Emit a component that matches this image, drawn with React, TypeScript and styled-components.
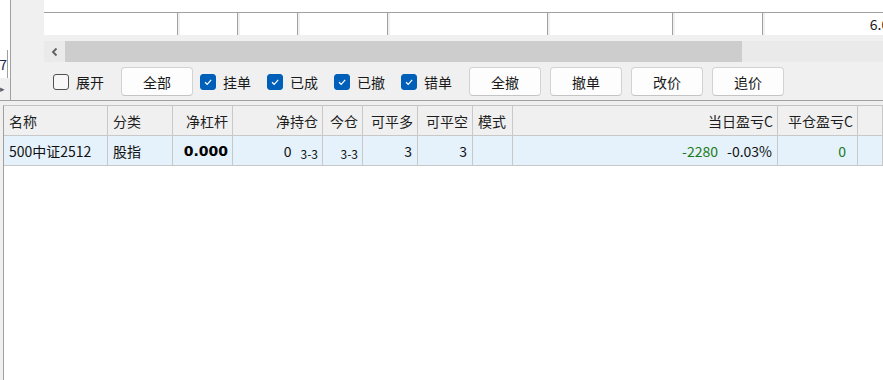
import styled, { createGlobalStyle } from 'styled-components';

const GlobalStyle = createGlobalStyle`
  html, body {
    margin: 0;
    padding: 0;
    background: #ffffff;
    overflow: hidden;
  }
  body {
    font-family: "Noto Sans CJK SC", "Noto Sans", sans-serif;
    font-size: 14px;
    color: #1a1a1a;
  }
`;

const Page = styled.div`
  width: 883px;
  height: 380px;
  overflow: hidden;
  display: flex;
  flex-direction: column;
`;

const TopSection = styled.div`
  display: flex;
  height: 100px;
  border-bottom: 1px solid #a0a0a0;
  background: #f0f0f0;
`;

const LeftStrip = styled.div`
  width: 10px;
  flex: none;
  display: flex;
  flex-direction: column;
  border-right: 1px solid #a0a0a0;
`;

const StripBlank = styled.div`
  height: 50px;
  background: #ffffff;
`;

const StripRow = styled.div`
  height: 28px;
  display: flex;
  background: #ffffff;
`;

const StripCell = styled.div`
  width: 7px;
  border-right: 1px solid #a0a0a0;
  overflow: hidden;
  display: flex;
  justify-content: flex-end;
  align-items: center;
  font-size: 14px;
  color: #1a2a4a;
  line-height: 1;
`;

const StripArrow = styled.div`
  flex: 1;
  background: #f0f0f0;
  font-size: 9px;
  color: #606060;
  line-height: 1;
  padding-top: 6px;
`;

const MainPane = styled.div`
  flex: 1;
  min-width: 0;
  padding-left: 33px;
  display: flex;
  flex-direction: column;
`;

const UpperGrid = styled.div`
  height: 35px;
  display: flex;
  flex-direction: column;
`;

const UpperBlank = styled.div`
  height: 12px;
  background: #ffffff;
  border-bottom: 1px solid #a0a0a0;
`;

const UpperRow = styled.div`
  display: flex;
  height: 22px;
  background: #ffffff;
`;

const UpperCell = styled.div<{ $w: number; $first?: boolean }>`
  width: ${(p) => p.$w}px;
  flex: none;
  box-sizing: border-box;
  border-left: ${(p) => (p.$first ? 'none' : '1px solid #a0a0a0')};
  box-shadow: ${(p) => (p.$first ? 'none' : 'inset 2px 0 #f0f0f0')};
  text-align: right;
  padding-right: 5px;
  line-height: 22px;
  color: #1a1a1a;
  white-space: nowrap;
`;

const ScrollBar = styled.div`
  margin-top: 6px;
  height: 21px;
  display: flex;
  background: #eaeaea;
`;

const ScrollArrow = styled.div`
  width: 21px;
  display: flex;
  align-items: center;
  justify-content: center;
  color: #606060;
`;

const ScrollThumb = styled.div`
  width: 677px;
  background: #cdcdcd;
`;

const Toolbar = styled.div`
  flex: 1;
  display: flex;
  align-items: center;
  padding-left: 9px;
  padding-top: 1px;
`;

const CheckItem = styled.label<{ $gap: number }>`
  display: flex;
  align-items: center;
  margin-right: ${(p) => p.$gap}px;
  color: #1a1a1a;
  line-height: 20px;
`;

const Box = styled.span<{ $on?: boolean }>`
  width: 16px;
  height: 16px;
  box-sizing: border-box;
  border-radius: 3px;
  margin-right: 7px;
  display: flex;
  align-items: center;
  justify-content: center;
  background: ${(p) => (p.$on ? '#005fb8' : '#f7f7f7')};
  border: 1px solid ${(p) => (p.$on ? '#005fb8' : '#505050')};
`;

const Button = styled.button<{ $gap: number }>`
  width: 72px;
  height: 29px;
  box-sizing: border-box;
  margin-right: ${(p) => p.$gap}px;
  border: 1px solid #d2d2d2;
  border-bottom-color: #c4c4c4;
  border-radius: 4px;
  background: #fdfdfd;
  font-family: inherit;
  font-size: 14px;
  color: #1a1a1a;
  padding: 0;
`;

const BottomSection = styled.div`
  flex: 1;
  background: #f0f0f0;
  padding: 4px 0 0 3px;
  display: flex;
`;

const TablePanel = styled.div`
  flex: 1;
  background: #ffffff;
  border-left: 1px solid #a0a0a0;
  border-top: 1px solid #c4c4c4;
`;

const COLS = '104px 65px 60px 90px 40px 55px 55px 40px 265px 80px 1fr';

const Row = styled.div<{ $head?: boolean }>`
  display: grid;
  grid-template-columns: ${COLS};
  height: 30px;
  box-sizing: border-box;
  border-bottom: 1px solid #c8c8c8;
  background: ${(p) => (p.$head ? '#f0f0f0' : '#e5f1fb')};
`;

const Cell = styled.div<{ $align?: 'left' | 'right'; $pr?: number }>`
  border-right: 1px solid #c8c8c8;
  display: flex;
  align-items: center;
  justify-content: ${(p) => (p.$align === 'right' ? 'flex-end' : 'flex-start')};
  padding: ${(p) => (p.$align === 'right' ? `0 ${p.$pr ?? 4}px 0 0` : '0 0 0 5px')};
  white-space: nowrap;
  overflow: hidden;
  color: #111111;
  line-height: 20px;
`;

const HeadText = styled.span`
  color: #1e1e1e;
`;

const BoldNum = styled.span`
  font-family: "DejaVu Sans", Verdana, sans-serif;
  font-weight: bold;
  font-size: 14px;
  color: #000000;
`;

const Small = styled.span<{ $ml: number }>`
  font-size: 12px;
  margin-left: ${(p) => p.$ml}px;
  position: relative;
  top: 3px;
`;

const Green = styled.span`
  color: #1a7a1a;
`;

const Pct = styled.span`
  margin-left: 9px;
  color: #111111;
`;

const Check = () => (
  <svg width="10" height="10" viewBox="0 0 10 10">
    <path d="M2 5.2 L4.2 7.3 L8.2 2.8" fill="none" stroke="#ffffff" strokeWidth="1.2" />
  </svg>
);

const upperCells = [133, 60, 60, 90, 160, 125, 90, 140];

const checks = [
  { label: '挂单', gap: 16 },
  { label: '已成', gap: 16 },
  { label: '已撤', gap: 16 },
  { label: '错单', gap: 17 },
];

const actions = ['全撤', '撤单', '改价', '追价'];

const headers: { text: string; align: 'left' | 'right' }[] = [
  { text: '名称', align: 'left' },
  { text: '分类', align: 'left' },
  { text: '净杠杆', align: 'right' },
  { text: '净持仓', align: 'right' },
  { text: '今仓', align: 'right' },
  { text: '可平多', align: 'right' },
  { text: '可平空', align: 'right' },
  { text: '模式', align: 'left' },
  { text: '当日盈亏C', align: 'right' },
  { text: '平仓盈亏C', align: 'right' },
  { text: '', align: 'left' },
];

export default function App() {
  return (
    <Page>
      <GlobalStyle />
      <TopSection>
        <LeftStrip>
          <StripBlank />
          <StripRow>
            <StripCell>7</StripCell>
          </StripRow>
          <StripArrow>▸</StripArrow>
        </LeftStrip>
        <MainPane>
          <UpperGrid>
            <UpperBlank />
            <UpperRow>
              {upperCells.map((w, i) => (
                <UpperCell key={i} $w={w} $first={i === 0}>
                  {i === upperCells.length - 1 ? '6.00' : ''}
                </UpperCell>
              ))}
            </UpperRow>
          </UpperGrid>
          <ScrollBar>
            <ScrollArrow>
              <svg width="8" height="10" viewBox="0 0 8 10">
                <path d="M5.5 1.5 L2 5 L5.5 8.5" fill="none" stroke="#606060" strokeWidth="1.8" />
              </svg>
            </ScrollArrow>
            <ScrollThumb />
          </ScrollBar>
          <Toolbar>
            <CheckItem $gap={17}>
              <Box />
              展开
            </CheckItem>
            <Button $gap={7}>全部</Button>
            {checks.map((c) => (
              <CheckItem key={c.label} $gap={c.gap}>
                <Box $on>
                  <Check />
                </Box>
                {c.label}
              </CheckItem>
            ))}
            {actions.map((a) => (
              <Button key={a} $gap={9}>
                {a}
              </Button>
            ))}
          </Toolbar>
        </MainPane>
      </TopSection>
      <BottomSection>
        <TablePanel>
          <Row $head>
            {headers.map((h, i) => (
              <Cell key={i} $align={h.align}>
                <HeadText>{h.text}</HeadText>
              </Cell>
            ))}
          </Row>
          <Row>
            <Cell $align="left">500中证2512</Cell>
            <Cell $align="left">股指</Cell>
            <Cell $align="right">
              <BoldNum>0.000</BoldNum>
            </Cell>
            <Cell $align="right">
              <span>0</span>
              <Small $ml={9}>3-3</Small>
            </Cell>
            <Cell $align="right">
              <Small $ml={0}>3-3</Small>
            </Cell>
            <Cell $align="right" $pr={5}>3</Cell>
            <Cell $align="right" $pr={5}>3</Cell>
            <Cell $align="left" />
            <Cell $align="right" $pr={5}>
              <Green>-2280</Green>
              <Pct>-0.03%</Pct>
            </Cell>
            <Cell $align="right" $pr={11}>
              <Green>0</Green>
            </Cell>
            <Cell $align="left" />
          </Row>
        </TablePanel>
      </BottomSection>
    </Page>
  );
}
